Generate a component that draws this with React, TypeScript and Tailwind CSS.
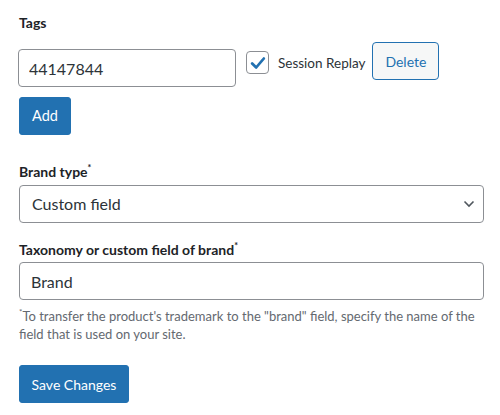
import React from "react";

export default function App() {
  return (
    <div
      className="w-[500px] h-[415px] bg-white text-[#1d2327] pl-[19px] pr-[16px]"
      style={{ fontFamily: 'Lato, "Noto Sans", sans-serif' }}
    >
      <div className="pt-[13px] text-[14px] leading-[20px] font-bold">Tags</div>
      <div className="flex items-start mt-[9px]">
        <input
          readOnly
          value="44147844"
          className="mt-[7px] -ml-[1px] w-[218px] h-[38px] rounded-[4px] border border-[#8c8f94] px-[10px] text-[16px] text-[#2c3338] outline-none"
        />
        <div className="mt-[9px] ml-[10px] flex items-center">
          <span className="w-[23px] h-[23px] rounded-[4px] border border-[#8c8f94] flex items-center justify-center bg-white">
            <svg width="18" height="18" viewBox="0 0 20 20">
              <path d="M3.5 10.5 L8 15 L16.5 5" fill="none" stroke="#2271b1" strokeWidth="3" strokeLinecap="round" strokeLinejoin="round" />
            </svg>
          </span>
          <span className="ml-[9px] text-[13.5px] leading-[20px] text-[#2c3338]">Session Replay</span>
        </div>
        <button className="ml-[7px] w-[67px] h-[38px] rounded-[4px] border border-[#2271b1] bg-[#f6f7f7] text-[#2271b1] text-[14px]">
          Delete
        </button>
      </div>
      <div className="mt-[10px] flex">
        <button className="w-[52px] h-[38px] rounded-[3px] bg-[#2271b1] border border-[#2271b1] text-white text-[14.5px]">
          Add
        </button>
      </div>

      <div className="mt-[27px] text-[14px] leading-[20px] font-bold">
        Brand type<span className="align-top text-[9px] leading-[12px]">*</span>
      </div>
      <div className="mt-[3px] w-[465px] h-[38px] rounded-[4px] border border-[#8c8f94] flex items-center justify-between pl-[12px] pr-[8px]">
        <span className="text-[16px] text-[#2c3338]">Custom field</span>
        <svg width="12" height="8" viewBox="0 0 12 8">
          <path d="M1.5 1.5 L6 6 L10.5 1.5" fill="none" stroke="#50575e" strokeWidth="1.6" />
        </svg>
      </div>

      <div className="mt-[17px] text-[14px] leading-[20px] font-bold">
        Taxonomy or custom field of brand<span className="align-top text-[9px] leading-[12px]">*</span>
      </div>
      <input
        readOnly
        value="Brand"
        className="mt-[2px] w-[465px] h-[38px] rounded-[4px] border border-[#8c8f94] px-[11px] text-[16px] text-[#2c3338] outline-none"
      />
      <p className="mt-[7px] text-[13px] leading-[18px] text-[#646970] pr-[4px]">
        <span className="align-top text-[8px] leading-[10px]">*</span>To transfer the product's trademark to the "brand" field, specify the name of the field that is used on your site.
      </p>
      <div className="mt-[22px] flex">
        <button className="w-[110px] h-[38px] rounded-[3px] bg-[#2271b1] border border-[#2271b1] text-white text-[14px]">
          Save Changes
        </button>
      </div>
    </div>
  );
}
